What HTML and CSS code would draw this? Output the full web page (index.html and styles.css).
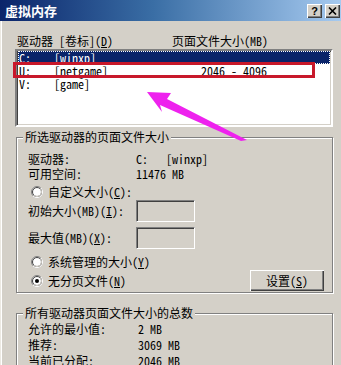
FILE: index.html
```html
<!DOCTYPE html>
<html>
<head>
<meta charset="utf-8">
<link rel="stylesheet" href="styles.css">
</head>
<body>
<div class="window">
  <div class="titlebar">
    <span class="title">虚拟内存</span>
    <div class="tbtns">
      <span class="tbtn help">?</span>
      <span class="tbtn"><svg width="9" height="8" viewBox="0 0 9 8"><path d="M1 0.5 L8 7.5 M8 0.5 L1 7.5" stroke="#000" stroke-width="1.6"/></svg></span>
    </div>
  </div>
  <div class="body">
    <div class="list-head"><span class="h-drive">驱动器 [卷标](<u>D</u>)</span><span class="h-size">页面文件大小(MB)</span></div>
    <div class="listbox">
      <div class="row selected"><span class="c1">C:</span><span class="c2">[winxp]</span><span class="c3"></span></div>
      <div class="row"><span class="c1">U:</span><span class="c2">[netgame]</span><span class="c3">2046 - 4096</span></div>
      <div class="row"><span class="c1">V:</span><span class="c2">[game]</span><span class="c3"></span></div>
    </div>

    <div class="group g1">
      <div class="gtitle">所选驱动器的页面文件大小</div>
      <div class="frow first"><span class="lbl">驱动器:</span><span class="val">C:&nbsp;&nbsp;&nbsp;[winxp]</span></div>
      <div class="frow"><span class="lbl">可用空间:</span><span class="val">11476 MB</span></div>
      <div class="rrow r1">
        <svg class="radio" width="12" height="12" viewBox="0 0 12 12"><circle cx="6" cy="6" r="5.5" fill="#fff" stroke="#808080"/><path d="M10 2 A5.5 5.5 0 0 1 2 10" fill="none" stroke="#fff"/><circle cx="6" cy="6" r="4.5" fill="none" stroke="#404040"/><path d="M9.2 2.8 A4.5 4.5 0 0 1 2.8 9.2" fill="none" stroke="#d4d0c8"/></svg>
        <span>自定义大小(<u>C</u>):</span>
      </div>
      <div class="irow i1"><span class="lbl">初始大小(MB)(<u>I</u>):</span><span class="input"></span></div>
      <div class="irow i2"><span class="lbl">最大值(MB)(<u>X</u>):</span><span class="input"></span></div>
      <div class="rrow r2">
        <svg class="radio" width="12" height="12" viewBox="0 0 12 12"><circle cx="6" cy="6" r="5.5" fill="#fff" stroke="#808080"/><path d="M10 2 A5.5 5.5 0 0 1 2 10" fill="none" stroke="#fff"/><circle cx="6" cy="6" r="4.5" fill="none" stroke="#404040"/><path d="M9.2 2.8 A4.5 4.5 0 0 1 2.8 9.2" fill="none" stroke="#d4d0c8"/></svg>
        <span>系统管理的大小(<u>Y</u>)</span>
      </div>
      <div class="brow">
        <div class="rrow">
          <svg class="radio" width="12" height="12" viewBox="0 0 12 12"><circle cx="6" cy="6" r="5.5" fill="#fff" stroke="#808080"/><path d="M10 2 A5.5 5.5 0 0 1 2 10" fill="none" stroke="#fff"/><circle cx="6" cy="6" r="4.5" fill="none" stroke="#404040"/><path d="M9.2 2.8 A4.5 4.5 0 0 1 2.8 9.2" fill="none" stroke="#d4d0c8"/><circle cx="6" cy="6" r="2" fill="#000"/></svg>
          <span>无分页文件(<u>N</u>)</span>
        </div>
        <span class="button">设置(<u>S</u>)</span>
      </div>
    </div>

    <div class="group g2">
      <div class="gtitle">所有驱动器页面文件大小的总数</div>
      <div class="trow first"><span class="lbl">允许的最小值:</span><span class="val">2 MB</span></div>
      <div class="trow"><span class="lbl">推荐:</span><span class="val">3069 MB</span></div>
      <div class="trow"><span class="lbl">当前已分配:</span><span class="val">2046 MB</span></div>
    </div>
  </div>

  <div class="mark"></div>
  <svg class="arrow" width="341" height="365" viewBox="0 0 341 365">
    <polygon points="147,92 171,93 167,99 247,140 241,141 160,105 162,112" fill="#ee22ee"/>
  </svg>
</div>
</body>
</html>
```

FILE: styles.css
```css
* { box-sizing: border-box; }
html, body { margin: 0; padding: 0; }
body {
  width: 341px;
  height: 365px;
  overflow: hidden;
  background: #d4d0c8;
  font-family: "Noto Sans Mono CJK SC", "Noto Sans CJK SC", sans-serif;
  font-size: 12px;
  line-height: 14px;
  color: #000;
}
.window {
  position: relative;
  width: 341px;
  height: 365px;
  overflow: hidden;
  background: #d4d0c8;
  box-shadow: inset 1px 0 0 #ece9e2, inset 2px 0 0 #ffffff;
}
.titlebar {
  height: 21px;
  background: linear-gradient(to right, #0a246a 0%, #3a6ea5 45%, #a6caf0 100%);
  display: flex;
  align-items: center;
  justify-content: space-between;
  padding: 0 1px 0 5px;
}
.title {
  color: #fff;
  font-weight: bold;
  font-size: 13px;
  line-height: 21px;
  font-family: "Noto Sans CJK SC", sans-serif;
}
.tbtns { display: flex; gap: 3px; }
.tbtn {
  width: 15px;
  height: 14px;
  background: #d4d0c8;
  box-shadow: inset 1px 1px 0 #fff, inset -1px -1px 0 #404040, inset -2px -2px 0 #808080;
  display: flex;
  align-items: center;
  justify-content: center;
  font-family: "Liberation Sans", sans-serif;
  font-weight: bold;
  font-size: 11px;
  line-height: 14px;
}
.body { padding: 13px 8px 0 15px; }
.list-head {
  height: 14px;
  line-height: 14px;
  display: flex;
  padding-left: 2px;
}
.h-drive { width: 155px; }
.listbox {
  margin-top: 1px;
  width: 318px;
  height: 78px;
  background: #fff;
  border-style: solid;
  border-width: 2px;
  border-color: #808080 #fff #fff #808080;
  box-shadow: inset 1px 1px 0 #404040, inset -1px -1px 0 #d4d0c8;
  padding: 0 1px;
}
.row {
  height: 13px;
  line-height: 13px;
  display: flex;
  padding-left: 1px;
}
.row.selected {
  background: #0a246a;
  color: #fff;
  outline: 1px dotted #fff;
  outline-offset: -1px;
}
.c1 { width: 35px; }
.c2 { width: 147px; }
.mark {
  position: absolute;
  left: 13px;
  top: 62px;
  width: 302px;
  height: 16px;
  border: 3px solid #c8182a;
}
.arrow {
  position: absolute;
  left: 0;
  top: 0;
  pointer-events: none;
}
.group {
  margin-left: 1px;
  width: 317px;
  border: 1px solid #808080;
  box-shadow: inset 1px 1px 0 #fff, 1px 1px 0 #fff;
  padding: 0 8px 1px 11px;
}
.g1 { margin-top: 10px; height: 156px; }
.g2 { margin-top: 20px; height: 80px; }
.gtitle {
  display: block;
  width: fit-content;
  margin: -8px 0 0 -5px;
  padding: 0 2px;
  background: #d4d0c8;
  line-height: 14px;
  height: 14px;
}
.frow {
  display: flex;
  height: 15px;
  line-height: 15px;
}
.frow.first { margin-top: 7px; }
.lbl { width: 108px; flex: none; }
.val { white-space: pre; }
.rrow {
  display: flex;
  align-items: center;
  height: 14px;
  line-height: 14px;
  padding-left: 3px;
  gap: 5px;
}
.rrow.r1 { margin-top: 4px; }
.rrow.r2 { margin-top: 6px; }
.radio { flex: none; }
.irow {
  display: flex;
  align-items: center;
  height: 22px;
}
.irow.i1 { margin-top: 1px; }
.irow.i2 { margin-top: 5px; }
.input {
  width: 59px;
  height: 22px;
  border-style: solid;
  border-width: 1px;
  border-color: #808080 #fff #fff #808080;
  box-shadow: inset 1px 1px 0 #404040, inset -1px -1px 0 #d4d0c8;
  background: #d4d0c8;
}
.brow {
  margin-top: 1px;
  height: 21px;
  display: flex;
  align-items: center;
  justify-content: space-between;
}
.brow .rrow { height: 21px; }
.button {
  width: 74px;
  height: 21px;
  line-height: 21px;
  text-align: center;
  background: #d4d0c8;
  box-shadow: inset 1px 1px 0 #fff, inset -1px -1px 0 #404040, inset -2px -2px 0 #808080;
}
.trow {
  display: flex;
  height: 16px;
  line-height: 16px;
}
.trow.first { margin-top: 1px; }
.g2 .lbl { width: 110px; }
```
